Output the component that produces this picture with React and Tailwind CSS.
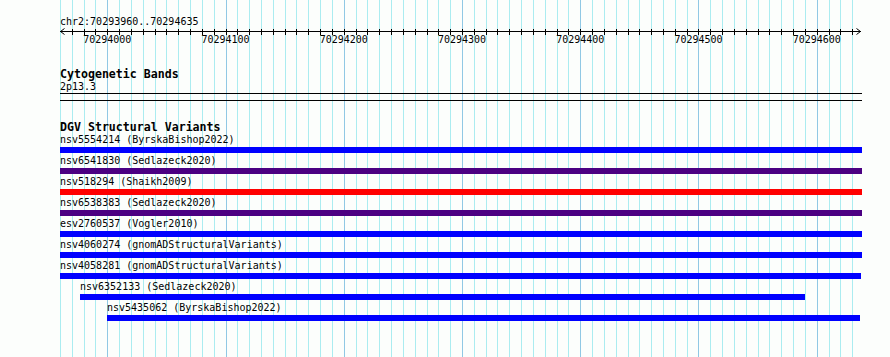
import React from "react";

const START = 70293960;
const SCALE = 1.1824;
const X0 = 60;
const pos = (bp) => X0 + (bp - START) * SCALE;

const gridX = Array.from({ length: 68 }, (_, k) => ({
  x: Math.round(pos(START + k * 10)) + 0.5,
  major: (k - 4) % 10 === 0,
}));

const majors = [70294000, 70294100, 70294200, 70294300, 70294400, 70294500, 70294600];

const variants = [
  { label: "nsv5554214 (ByrskaBishop2022)", color: "#0000ff", x1: 60, x2: 862 },
  { label: "nsv6541830 (Sedlazeck2020)", color: "#4b0082", x1: 60, x2: 862 },
  { label: "nsv518294 (Shaikh2009)", color: "#ff0000", x1: 60, x2: 862 },
  { label: "nsv6538383 (Sedlazeck2020)", color: "#4b0082", x1: 60, x2: 862 },
  { label: "esv2760537 (Vogler2010)", color: "#0000ff", x1: 60, x2: 862 },
  { label: "nsv4060274 (gnomADStructuralVariants)", color: "#0000ff", x1: 60, x2: 862 },
  { label: "nsv4058281 (gnomADStructuralVariants)", color: "#0000ff", x1: 60, x2: 861 },
  { label: "nsv6352133 (Sedlazeck2020)", color: "#0000ff", x1: 80, x2: 805 },
  { label: "nsv5435062 (ByrskaBishop2022)", color: "#0000ff", x1: 107, x2: 860 },
];

export default function App() {
  return (
    <div
      className="relative w-[890px] h-[357px] overflow-hidden bg-[#fcfefc] text-black"
      style={{ fontFamily: '"DejaVu Sans Mono", monospace' }}
    >
      <svg className="absolute inset-0" width="890" height="357">
        {gridX.map((g, i) => (
          <line
            key={i}
            x1={g.x}
            x2={g.x}
            y1="0"
            y2="357"
            stroke={g.major ? "#90c8e4" : "#aaecf0"}
            strokeWidth="1"
          />
        ))}
      </svg>

      <div className="relative pl-[60px]">
        <div className="mt-[16px] h-[12px] text-[10px] leading-[12px]">chr2:70293960..70294635</div>

        <div className="relative h-[18px] w-[802px]">
          <svg className="absolute left-0 top-0" width="803" height="8">
            <line x1="0" x2="801" y1="3.5" y2="3.5" stroke="#000" strokeWidth="1" />
            {gridX.slice(1).map((g, i) => (
              <line key={i} x1={g.x - 60} x2={g.x - 60} y1="1" y2="7" stroke="#000" strokeWidth="1" />
            ))}
            <polyline points="4.5,0.5 0.5,3.5 4.5,6.5" fill="none" stroke="#000" strokeWidth="1" />
            <polyline points="796.5,0.5 800.5,3.5 796.5,6.5" fill="none" stroke="#000" strokeWidth="1" />
          </svg>
          {majors.map((m) => (
            <span
              key={m}
              className="absolute top-[6px] -translate-x-1/2 text-[10px] leading-[12px]"
              style={{ left: pos(m) - 60 }}
            >
              {m}
            </span>
          ))}
        </div>

        <div className="mt-[21px] h-[14px] text-[11.6px] font-bold leading-[14px]">Cytogenetic Bands</div>
        <div className="h-[12px] text-[10px] leading-[12px]">2p13.3</div>
        <div className="h-[1px] w-[802px] bg-black" />
        <div className="mt-[6px] h-[1px] w-[802px] bg-black" />

        <div className="mt-[19px] h-[14px] text-[11.6px] font-bold leading-[14px]">DGV Structural Variants</div>
        <div className="flex flex-col">
          {variants.map((v) => (
            <div key={v.label} className="flex h-[21px] flex-col" style={{ marginLeft: v.x1 - 60 }}>
              <div className="h-[12px] whitespace-nowrap text-[10px] leading-[12px]">{v.label}</div>
              <div className="mt-[1px] h-[6px]" style={{ width: v.x2 - v.x1, backgroundColor: v.color }} />
            </div>
          ))}
        </div>
      </div>
    </div>
  );
}
